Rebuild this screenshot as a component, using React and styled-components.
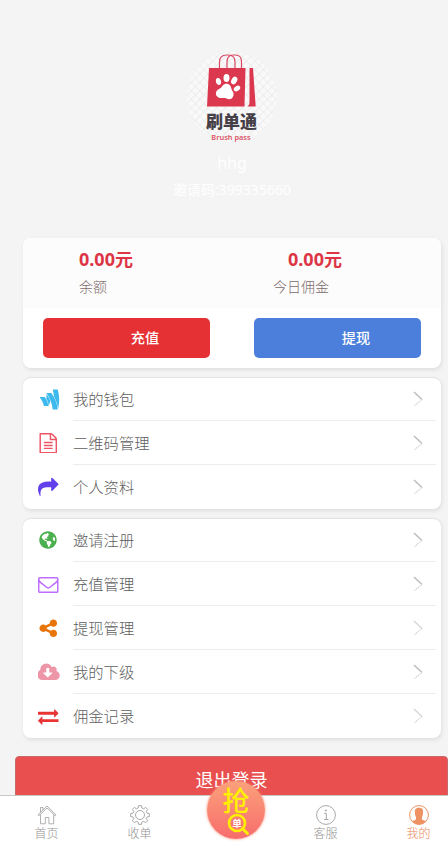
import React from 'react';
import styled, { createGlobalStyle } from 'styled-components';
import { FaGoogleWallet, FaGlobeAmericas } from 'react-icons/fa';

const Global = createGlobalStyle`
  * { box-sizing: border-box; }
  body { margin: 0; background: #f4f4f4; font-family: "Noto Sans", "Noto Sans CJK SC", sans-serif; }
`;

const Screen = styled.div`
  display: flex;
  flex-direction: column;
  width: 448px;
  height: 846px;
  overflow: hidden;
  background: #f4f4f4;
`;
const Content = styled.main`
  flex: 1;
  min-height: 0;
  overflow: hidden;
`;
const Profile = styled.header`
  display: flex;
  flex-direction: column;
  align-items: center;
  width: 464px;
  height: 238px;
  padding-top: 52px;
  color: #fff;
`;
const Avatar = styled.svg`
  display: block;
  width: 90px;
  height: 90px;
`;
const UserName = styled.div`
  margin-top: 9px;
  font-size: 16px;
  line-height: 24px;
`;
const InviteCode = styled.div`
  margin-top: 5px;
  font-size: 14px;
  line-height: 20px;
`;
const Card = styled.section`
  width: 418px;
  margin: 0 0 ${p => p.$gap || 0}px 23px;
  border-radius: 8px;
  background: #fff;
  box-shadow: 1px 2px 4px rgba(0, 0, 0, 0.09);
  overflow: hidden;
`;
const Balances = styled.div`
  display: flex;
  height: 70px;
  padding: 8px 0 0 56px;
  background: #fcfcfc;
`;
const Balance = styled.div`
  width: ${p => p.$width}px;
`;
const Amount = styled.div`
  padding-left: ${p => p.$indent || 0}px;
  color: #dc3545;
  font-size: 18px;
  font-weight: 700;
  line-height: 26px;
`;
const Caption = styled.div`
  margin-top: 5px;
  color: #7d6a6a;
  font-size: 14px;
  font-weight: 300;
  line-height: 20px;
`;
const Actions = styled.div`
  display: flex;
  gap: 44px;
  padding: 10px 20px;
`;
const Action = styled.button`
  width: 167px;
  height: 40px;
  padding: 0 0 2px 37px;
  border: 0;
  border-radius: 5px;
  background: ${p => p.$color};
  color: #fff;
  font: 500 14.2px "Noto Sans CJK SC", sans-serif;
`;
const Menu = styled(Card)`
  border-top: 1px solid #e2e2e2;
`;
const Item = styled.div`
  display: flex;
  height: 44px;
  padding-left: 15px;
  &:first-child { margin-top: -1px; }
  &:last-child > div { border-bottom-color: transparent; }
`;
const IconBox = styled.span`
  display: flex;
  align-items: center;
  width: 35px;
  height: 44px;
  padding-left: ${p => p.$inset || 0}px;
  color: ${p => p.$color};
  svg { display: block; flex: none; }
`;
const ItemBody = styled.div`
  display: flex;
  align-items: center;
  justify-content: space-between;
  width: 363px;
  height: 44px;
  padding-right: 13px;
  border-bottom: 1px solid #ececec;
`;
const Label = styled.span`
  padding-bottom: 1px;
  color: #5e5e5e;
  font: 300 15.3px/22px "Noto Sans CJK SC", sans-serif;
`;
const Logout = styled.button`
  display: block;
  width: 433px;
  height: 49px;
  margin: 18px 0 0 15px;
  padding: 0;
  border: 1px solid #c9686a;
  border-radius: 4px;
  background: #e94f4f;
  color: #fff;
  font: 400 18px/45px "Noto Sans CJK SC", sans-serif;
  span { display: block; height: 47px; }
`;
const TabBar = styled.nav`
  position: relative;
  display: grid;
  flex: none;
  grid-template-columns: repeat(5, 93px);
  height: 51px;
  border-top: 1px solid #c8c8c8;
  background: #fff;
`;
const Tab = styled.div`
  display: flex;
  flex-direction: column;
  align-items: center;
  padding: 9px 0 0 0;
  color: ${p => (p.$active ? '#ec8a58' : '#929292')};
  font: 300 12px/15px "Noto Sans CJK SC", sans-serif;
  svg { display: block; color: ${p => (p.$active ? '#ee9263' : '#a8a8a8')}; }
`;
const Grab = styled.div`
  position: absolute;
  left: 207px;
  top: -15px;
  width: 58px;
  height: 58px;
  border-radius: 50%;
  background: linear-gradient(#fba17b, #f76d6c);
  box-shadow: 0 0 3px #f98b70;
  color: #ffef00;
  text-align: center;
  font: 500 27px/38px "Noto Sans CJK SC", sans-serif;
`;
const Lens = styled.svg`
  position: absolute;
  left: 20px;
  top: 32px;
`;

const PATHS = {
  file: 'M1596 380q28 28 48 76t20 88v1152q0 40-28 68t-68 28h-1344q-40 0-68-28t-28-68v-1600q0-40 28-68t68-28h896q40 0 88 20t76 48zm-444-244v376h376q-10-29-22-41l-313-313q-12-12-41-22zm384 1528v-1024h-416q-40 0-68-28t-28-68v-416h-768v1536h1280zm-1024-864q0-14 9-23t23-9h704q14 0 23 9t9 23v64q0 14-9 23t-23 9h-704q-14 0-23-9t-9-23v-64zm736 224q14 0 23 9t9 23v64q0 14-9 23t-23 9h-704q-14 0-23-9t-9-23v-64q0-14 9-23t23-9h704zm0 256q14 0 23 9t9 23v64q0 14-9 23t-23 9h-704q-14 0-23-9t-9-23v-64q0-14 9-23t23-9h704z',
  share: 'M1792 640q0 26-19 45l-512 512q-19 19-45 19t-45-19-19-45v-256h-224q-98 0-175.5 6t-154 21.5-133 42.5-105.5 69.5-80 101-48.5 138.5-17.5 181q0 55 5 123 0 6 2.5 23.5t2.5 26.5q0 15-8.5 25t-23.5 10q-16 0-28-17-7-9-13-22t-13.5-30-10.5-24q-127-285-127-451 0-199 53-333 162-403 875-403h224v-256q0-26 19-45t45-19 45 19l512 512q19 19 19 45z',
  mail: 'M1664 1504v-768q-32 36-69 66-268 206-426 338-51 43-83 67t-86.5 48.5-102.5 24.5h-2q-48 0-102.5-24.5t-86.5-48.5-83-67q-158-132-426-338-37-30-69-66v768q0 13 9.5 22.5t22.5 9.5h1472q13 0 22.5-9.5t9.5-22.5zm0-1051v-24.5l-.5-13-3-12.5-5.5-9-9-7.5-14-2.5h-1472q-13 0-22.5 9.5t-9.5 22.5q0 168 147 284 193 152 401 317 6 5 35 29.5t46 37.5 44.5 31.5 50.5 27.5 43 9h2q20 0 43-9t50.5-27.5 44.5-31.5 46-37.5 35-29.5q208-165 401-317 54-43 100.5-115.5t46.5-131.5zm128-37v1088q0 66-47 113t-113 47h-1472q-66 0-113-47t-47-113v-1088q0-66 47-113t113-47h1472q66 0 113 47t47 113z',
  nodes: 'M1344 1024q133 0 226.5 93.5t93.5 226.5-93.5 226.5-226.5 93.5-226.5-93.5-93.5-226.5q0-12 2-34l-360-180q-92 86-218 86-133 0-226.5-93.5t-93.5-226.5 93.5-226.5 226.5-93.5q126 0 218 86l360-180q-2-22-2-34 0-133 93.5-226.5t226.5-93.5 226.5 93.5 93.5 226.5-93.5 226.5-226.5 93.5q-126 0-218-86l-360 180q2 22 2 34t-2 34l360 180q92-86 218-86z',
  cloud: 'M1216 928q0-14-9-23t-23-9h-224v-352q0-13-9.5-22.5t-22.5-9.5h-192q-13 0-22.5 9.5t-9.5 22.5v352h-224q-13 0-22.5 9.5t-9.5 22.5q0 14 9 23l352 352q9 9 23 9t23-9l351-351q10-12 10-24zm640 224q0 159-112.5 271.5t-271.5 112.5h-1088q-185 0-316.5-131.5t-131.5-316.5q0-130 70-240t188-165q-2-30-2-43 0-212 150-362t362-150q156 0 285.5 87t188.5 231q71-62 166-62 106 0 181 75t75 181q0 76-41 138 130 31 213.5 135.5t83.5 238.5z',
  swap: 'M1792 1184v192q0 13-9.5 22.5t-22.5 9.5h-1376v192q0 13-9.5 22.5t-22.5 9.5q-12 0-24-10l-319-320q-9-9-9-22 0-14 9-23l320-320q9-9 23-9 13 0 22.5 9.5t9.5 22.5v192h1376q13 0 22.5 9.5t9.5 22.5zm0-544q0 14-9 23l-320 320q-9 9-23 9-13 0-22.5-9.5t-9.5-22.5v-192h-1376q-13 0-22.5-9.5t-9.5-22.5v-192q0-13 9.5-22.5t22.5-9.5h1376v-192q0-14 9-23t23-9q12 0 24 10l319 319q9 9 9 23z',
};

const Glyph = ({ name }) => (
  <svg width={name === 'cloud' ? 22.5 : 20.5} height={name === 'cloud' ? 21 : 20.5} viewBox={name === 'cloud' ? '0 0 1920 1792' : '0 0 1792 1792'} fill="currentColor">
    <path d={PATHS[name]} />
  </svg>
);

const Chevron = ({ faint }) => (
  <svg width="10" height="16" viewBox="0 0 10 16" fill="none">
    <path d="M1 1l8 7.500" stroke={faint ? '#d8d8d8' : '#bdbdc0'} strokeWidth="1.500" />
    <path d="M9 8.500L1 15" stroke="#cfcfcf" strokeWidth="1.100" strokeDasharray="1.300 .8" />
  </svg>
);

const Row = ({ icon, color, inset, label, faint }) => (
  <Item>
    <IconBox $color={color} $inset={inset}>{icon}</IconBox>
    <ItemBody><Label>{label}</Label><Chevron faint={faint} /></ItemBody>
  </Item>
);

const Logo = () => (
  <Avatar viewBox="0 0 90 90">
    <defs>
      <pattern id="check" width="6" height="6" patternUnits="userSpaceOnUse" patternTransform="rotate(45)">
        <rect width="6" height="6" fill="#f9f9f9" />
        <path d="M0 0h6M0 0v6" stroke="#ebebeb" strokeWidth="1.600" />
      </pattern>
    </defs>
    <circle cx="45" cy="45" r="45" fill="url(#check)" />
    <g fill="none" stroke="#d94a63" strokeWidth="1.200">
      <path d="M32.500 17V10q0-7 7-7h1.500q7 0 7 7v7" />
      <path d="M40 17V10q0-7 6-7h2.500q6 0 6 7v7" />
    </g>
    <path d="M22 16h36.500l-1 38.500H20z" fill="#db3850" />
    <path d="M62.500 16H66l2.700 38.500h-8.500q2.500-1 2.300-6z" fill="#db3850" />
    <g fill="#fff">
      <ellipse cx="31.500" cy="29.500" rx="2.500" ry="3.500" transform="rotate(-15 31.500 29.500)" />
      <ellipse cx="39.500" cy="26" rx="3" ry="4" />
      <ellipse cx="47.200" cy="28.500" rx="2.800" ry="4" transform="rotate(28 47.200 28.500)" />
      <ellipse cx="50" cy="36.500" rx="2.400" ry="3.500" transform="rotate(55 50 36.500)" />
      <path d="M38 32c4-1 6 2 6.500 5 1 3 2.500 3 2 6-.5 4-4 5-7 3.500-3-1.500-5 .5-8-1-4-2-3-7 .5-8.500 3-1 3-4 6-5z" />
    </g>
    <text x="44.500" y="75.500" textAnchor="middle" fontFamily="Noto Sans CJK SC, sans-serif" fontSize="17" fontWeight="900" fill="#454047">刷单通</text>
    <text x="44" y="87.500" textAnchor="middle" fontFamily="Noto Sans, sans-serif" fontSize="7.400" fontWeight="600" fill="#dc5367">Brush pass</text>
  </Avatar>
);

const HomeIcon = () => (
  <svg width="20" height="20" viewBox="0 0 20 20" fill="none" stroke="currentColor" strokeWidth=".9">
    <path d="M1 9.800L10 1l9 8.800-.8 1L10 3 1.800 10.800zM3.500 7.300V2.500H6v2.400M3.500 9.500v9.300h4.800v-6.300h3.600v6.300h4.800V9.500" />
  </svg>
);
const GearIcon = () => (
  <svg width="20" height="20" viewBox="0 0 20 20" fill="none" stroke="currentColor" strokeWidth="1" strokeLinejoin="round">
    <path d="M8.500.700h3l.4 2.300 1.800.8 2-1.400 2 2-1.400 2 .8 1.800 2.200.4v3l-2.300.4-.7 1.700 1.400 2-2 2-2-1.400-1.800.8-.4 2.200h-3l-.4-2.300-1.700-.7-2 1.400-2-2 1.300-2-.7-1.700-2.300-.4v-3L3 8.200l.8-1.800-1.400-2 2-2 2 1.400L8.100 3z" />
    <circle cx="10" cy="10" r="4.500" />
  </svg>
);
const InfoIcon = () => (
  <svg width="20" height="20" viewBox="0 0 20 20" fill="none" stroke="currentColor">
    <circle cx="10" cy="10" r="9.400" />
    <path d="M8 8.300h2.300v6M8 14.500h4.500" />
    <circle cx="10" cy="5.500" r=".6" fill="currentColor" />
  </svg>
);
const UserIcon = () => (
  <svg width="20" height="20" viewBox="0 0 20 20">
    <circle cx="10" cy="10" r="9.400" fill="#fff" stroke="currentColor" />
    <path d="M10 2.800c3.200 0 4.300 1.700 4.100 4.400-.1 2.300-.4 3.800-1.100 4.900v2.400c1 .9 3 1.100 4 1.700C15 18.700 12.700 19.400 10 19.400s-5-.7-7-3.200c1-.6 3-.8 4-1.700v-2.400C6.300 11 6 9.500 5.900 7.200 5.700 4.500 6.800 2.800 10 2.800z" fill="currentColor" />
  </svg>
);

export default function App() {
  return (
    <Screen>
      <Global />
      <Content>
        <Profile>
          <Logo />
          <UserName>hhg</UserName>
          <InviteCode>邀请码:399335660</InviteCode>
        </Profile>
        <Card $gap={9}>
          <Balances>
            <Balance $width={194}><Amount>0.00元</Amount><Caption>余额</Caption></Balance>
            <Balance $width={140}><Amount $indent={15}>0.00元</Amount><Caption>今日佣金</Caption></Balance>
          </Balances>
          <Actions>
            <Action $color="#e63134">充值</Action>
            <Action $color="#4b7fdb">提现</Action>
          </Actions>
        </Card>
        <Menu $gap={9}>
          <Row icon={<FaGoogleWallet size={23} />} color="#3db9ee" label="我的钱包" />
          <Row icon={<Glyph name="file" />} color="#ee5566" label="二维码管理" />
          <Row icon={<Glyph name="share" />} color="#6240ec" label="个人资料" />
        </Menu>
        <Menu>
          <Row icon={<FaGlobeAmericas size={18} />} inset={1} color="#4caf50" label="邀请注册" />
          <Row icon={<Glyph name="mail" />} color="#be6cff" label="充值管理" />
          <Row icon={<Glyph name="nodes" />} color="#e8750a" label="提现管理" faint />
          <Row icon={<Glyph name="cloud" />} color="#ec96a7" label="我的下级" />
          <Row icon={<Glyph name="swap" />} color="#e93435" label="佣金记录" faint />
        </Menu>
        <Logout><span>退出登录</span></Logout>
      </Content>
      <TabBar>
        <Tab><HomeIcon />首页</Tab>
        <Tab><GearIcon />收单</Tab>
        <Tab />
        <Tab><InfoIcon />客服</Tab>
        <Tab $active><UserIcon />我的</Tab>
        <Grab>
          抢
          <Lens width="24" height="24" viewBox="0 0 24 24">
            <circle cx="10" cy="10" r="8" fill="none" stroke="#ffef00" strokeWidth="2.600" />
            <path d="M15.500 15.500l5 5" stroke="#ffef00" strokeWidth="3" strokeLinecap="round" />
            <text x="10" y="13.500" textAnchor="middle" fontSize="9.500" fontWeight="700" fill="#fff">单</text>
          </Lens>
        </Grab>
      </TabBar>
    </Screen>
  );
}
